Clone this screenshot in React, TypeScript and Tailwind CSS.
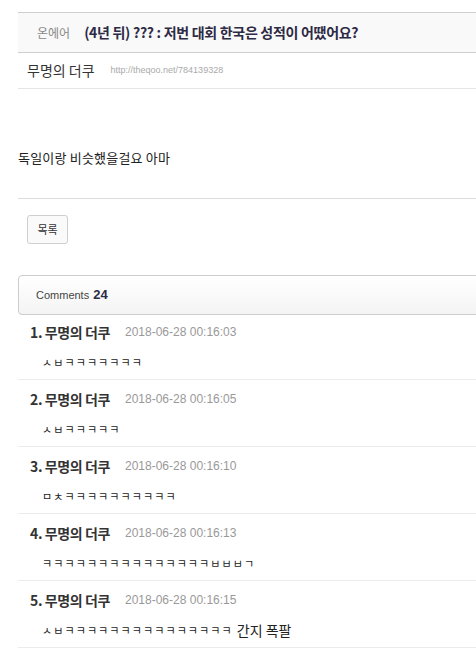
import React from 'react';

const comments = [
  { n: 1, time: '2018-06-28 00:16:03', text: 'ㅅㅂㅋㅋㅋㅋㅋㅋㅋ' },
  { n: 2, time: '2018-06-28 00:16:05', text: 'ㅅㅂㅋㅋㅋㅋㅋ' },
  { n: 3, time: '2018-06-28 00:16:10', text: 'ㅁㅊㅋㅋㅋㅋㅋㅋㅋㅋㅋㅋ' },
  { n: 4, time: '2018-06-28 00:16:13', text: 'ㅋㅋㅋㅋㅋㅋㅋㅋㅋㅋㅋㅋㅋㅋㅋㅂㅂㅂㄱ' },
  { n: 5, time: '2018-06-28 00:16:15', text: 'ㅅㅂㅋㅋㅋㅋㅋㅋㅋㅋㅋㅋㅋㅋㅋㅋㅋ', tail: '간지 폭팔' },
];

const font = { fontFamily: '"Noto Sans CJK KR", "Liberation Sans", sans-serif' };
const latin = { fontFamily: '"Liberation Sans", sans-serif' };

export default function App() {
  return (
    <div className="w-[476px] h-[648px] overflow-hidden bg-white text-[#333]" style={font}>
      <div className="pl-[18px] pt-[12px] w-[520px]">
        {/* 제목 */}
        <div className="h-[41px] flex items-center gap-[14px] pl-[19px] bg-[#f9f9f9] border-y border-[#cfcfcf]">
          <span className="text-[12px] text-[#888]">온에어</span>
          <span className="text-[14px] font-bold text-[#2d2a45] tracking-[-0.3px]">(4년 뒤) ??? : 저번 대회 한국은 성적이 어땠어요?</span>
        </div>

        {/* 작성자 */}
        <div className="h-[36px] flex items-center gap-[16px] pl-[9px] border-b border-[#e6e6e6]">
          <span className="text-[14px] text-[#333]">무명의 더쿠</span>
          <span className="text-[9px] text-[#aaa]" style={latin}>http://theqoo.net/784139328</span>
        </div>

        {/* 본문 */}
        <div className="h-[110px] pt-[60px] border-b border-[#dcdcdc]">
          <p className="text-[13px] leading-[18px] text-[#222] tracking-[0.2px]">독일이랑 비슷했을걸요 아마</p>
        </div>

        <div className="pt-[16px] pl-[9px]">
          <button className="w-[41px] h-[29px] border border-[#cfcfcf] rounded-[3px] bg-[#fafafa] text-[11px] text-[#333]">목록</button>
        </div>

        {/* 댓글 */}
        <div className="mt-[31px] h-[40px] flex items-center pl-[17px] border border-[#cccccc] rounded-[4px] bg-gradient-to-b from-white to-[#f4f4f4]">
          <span className="text-[11px] text-[#444]" style={latin}>Comments</span>
          <span className="ml-[4px] text-[13px] font-bold text-[#2d2a45]" style={latin}>24</span>
        </div>

        <ul>
          {comments.map((c, i) => (
            <li key={c.n} className={`border-b border-[#ececec] ${i === 0 ? 'pt-[7px] h-[65px]' : 'pt-[9px] h-[67px]'}`}>
              <div className="flex items-center h-[20px] pl-[12px]">
                <span className="text-[14px] font-bold text-[#333] tracking-[-0.4px]">{c.n}. 무명의 더쿠</span>
                <span className="ml-[15px] text-[12px] text-[#999]" style={latin}>{c.time}</span>
              </div>
              <div className="mt-[12px] pl-[24px] h-[16px] flex items-center text-[11px] text-[#222] tracking-[1.1px]">
                {c.text}
                {c.tail && <span className="ml-[4px] text-[14px] tracking-normal">{c.tail}</span>}
              </div>
            </li>
          ))}
        </ul>
      </div>
    </div>
  );
}
